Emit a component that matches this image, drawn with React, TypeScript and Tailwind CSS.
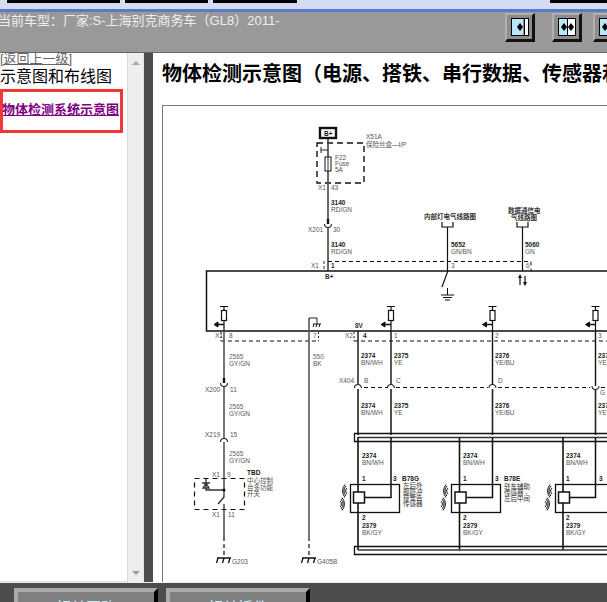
const CJK = "Liberation Sans, Noto Sans CJK SC, sans-serif";

function Label({ x, y, children, bold, color }: { x: number; y: number; children: string; bold?: boolean; color?: string }) {
  return (
    <text x={x} y={y} fontSize="6.5" fontFamily={CJK} fontWeight={bold ? 700 : 400} fill={color || "#555"}>
      {children}
    </text>
  );
}

function WireLabel({ x, y, num, color, gray }: { x: number; y: number; num: string; color: string; gray?: boolean }) {
  return (
    <>
      <Label x={x} y={y} bold={!gray} color={gray ? "#666" : "#222"}>{num}</Label>
      <Label x={x} y={y + 6.5} color="#555">{color}</Label>
    </>
  );
}

// pull-up resistor with arrow into the module
function PullUp({ x }: { x: number }) {
  return (
    <g stroke="#111" fill="none">
      <path d={`M${x - 4} 306.5H${x + 4}M${x} 306.5V310M${x} 321V331`} strokeWidth="1.2" />
      <rect x={x - 2.5} y={310.5} width={5} height={10} fill="#fff" strokeWidth="1.2" />
      <path d={`M${x} 324.5H${x - 9}`} strokeWidth="1.5" />
      <path d={`M${x - 10} 324.5l4 -2.5v5z`} fill="#111" />
    </g>
  );
}

function Ground({ x, y }: { x: number; y: number }) {
  return (
    <g stroke="#111" fill="none" strokeWidth="1.3">
      <path d={`M${x - 7} ${y}H${x + 7}M${x - 6} ${y}l-1.5 5M${x} ${y}l-1.5 5M${x + 6} ${y}l-1.5 5`} />
    </g>
  );
}

function Sensor({ x, left, right, tail }: { x: number; left: number; right: number; tail?: boolean }) {
  const inner = left - 5;
  return (
    <g fill="none" stroke="#111">
      <path d={`M${left} 437V550`} strokeWidth="1.6" />
      <rect x={x + 0.5} y={484.5} width={tail ? 80 : 49} height={28} strokeWidth="1.3" />
      <path d={`M${right} 437V497.5H${inner + 12}`} strokeWidth="1.5" />
      <rect x={inner + 0.5} y={492} width={11} height={11} fill="#fff" strokeWidth="1.5" />
      {/* radio waves */}
      <path d={`M${x - 3} 488a4 4 0 0 0 0 6M${x - 4} 486a7 7 0 0 0 0 10M${x - 5} 484.5a10 10 0 0 0 0 13`} strokeWidth="1" />
      <path d={`M${x - 10} 501a4 4 0 0 1 0 6M${x - 9} 499a7 7 0 0 1 0 10M${x - 8} 497.5a10 10 0 0 1 0 13`} strokeWidth="1" />
    </g>
  );
}

function Connector({ x, y, down }: { x: number; y: number; down?: boolean }) {
  return (
    <path
      d={down ? `M${x - 3.5} ${y - 3}a3.5 3.5 0 0 0 7 0` : `M${x - 3.5} ${y + 2}a3.5 3.5 0 0 1 7 0`}
      fill="#fff"
      stroke="#222"
      strokeWidth="1.1"
    />
  );
}

function Diagram() {
  return (
    <svg viewBox="163 106 444 476" className="block w-[444px] h-[476px]">
      {/* fuse block */}
      <rect x="320" y="128" width="16" height="10" fill="#fff" stroke="#111" strokeWidth="2.4" />
      <Label x={324} y={135.5} bold color="#111">B+</Label>
      <rect x="317" y="143" width="47" height="40" fill="none" stroke="#111" strokeWidth="1.4" strokeDasharray="6 4" />
      <path d="M328 139V271" stroke="#444" strokeWidth="1.6" />
      <path d="M321 150H328M321 147V153" stroke="#222" />
      <rect x="325" y="157" width="6" height="14" fill="#fff" stroke="#111" />
      <path d="M328 157V171" stroke="#333" />
      <Label x={366} y={139}>X51A</Label>
      <Label x={366} y={147}>保险丝盒—I/P</Label>
      <Label x={335} y={160}>F22</Label>
      <Label x={335} y={166}>Fuse</Label>
      <Label x={335} y={172}>5A</Label>
      <Label x={318} y={190}>X1</Label>
      <Label x={331} y={190}>43</Label>
      <WireLabel x={331} y={205} num="3140" color="RD/GN" />
      <path d="M328 219V226" stroke="#111" strokeWidth="2.4" />
      <Connector x={328} y={227} down />
      <Label x={308} y={232}>X201</Label>
      <Label x={333} y={232}>30</Label>
      <WireLabel x={331} y={247} num="3140" color="RD/GN" />

      {/* module outline */}
      <path d="M607 271H206.5V331H607" fill="none" stroke="#111" strokeWidth="1.5" />
      <path d="M328 261.5H531M531 261.5V271" fill="none" stroke="#111" strokeDasharray="4 3" />
      <path d="M324 261V271" stroke="#222" strokeDasharray="3 2" />
      <Label x={311} y={268}>X1</Label>
      <Label x={331} y={268} bold color="#222">1</Label>
      <Label x={325} y={279} bold color="#333">B+</Label>
      <Label x={451} y={268}>3</Label>
      <Label x={526} y={268}>6</Label>

      {/* upper feeds */}
      <Label x={424} y={219} bold color="#333">内部灯电气线路图</Label>
      <Label x={508} y={213} bold color="#333">数据通信电</Label>
      <Label x={511} y={220} bold color="#333">气线路图</Label>
      <path d="M442 222V227H453V222M517 222V227H528V222" fill="none" stroke="#111" strokeWidth="1.2" />
      <path d="M447.5 227V272L442 287M522.5 227V271" fill="none" stroke="#111" strokeWidth="1.2" />
      <WireLabel x={451} y={247} num="5652" color="GN/BN" />
      <WireLabel x={525} y={247} num="5060" color="GN" />
      <path d="M447.5 288V295M441 295H454M443 297.5H452M445 300H450" fill="none" stroke="#111" />
      <path d="M520 276V285M525 276V285" stroke="#111" strokeWidth="1.2" />
      <path d="M520 274l-2 4h4zM525 286l-2 -4h4z" fill="#111" />

      <PullUp x={224} />
      <PullUp x={391} />
      <PullUp x={492.5} />
      <PullUp x={595.5} />

      {/* left branch */}
      <path d="M221 341H319M354 341H607" stroke="#111" strokeDasharray="4 3" />
      <path d="M221 332V341M318.5 332V341M354 332V341" stroke="#222" strokeDasharray="2 2" />
      <Label x={215} y={338}>X1</Label>
      <Label x={229} y={338}>8</Label>
      <Label x={313} y={338}>7</Label>
      <Label x={345} y={338}>X2</Label>
      <Label x={363} y={338} bold color="#222">4</Label>
      <Label x={394} y={338}>1</Label>
      <Label x={495} y={338}>2</Label>
      <Label x={598} y={338}>3</Label>
      <Label x={355} y={328} bold color="#333">8V</Label>
      <path d="M224 331V537M309 318V537" stroke="#555" strokeWidth="1.6" />
      <path d="M224 537V556M309 537V556" stroke="#111" strokeWidth="1.2" strokeDasharray="4 3" />
      <path d="M309 318H317V324" fill="none" stroke="#222" />
      <path d="M313 324H321M314 324l-1 3M317 324l-1 3M320 324l-1 3" stroke="#111" />
      <WireLabel x={229} y={359} num="2565" color="GY/GN" gray />
      <WireLabel x={229} y={409} num="2565" color="GY/GN" gray />
      <WireLabel x={229} y={456} num="2565" color="GY/GN" gray />
      <WireLabel x={313} y={359} num="550" color="BK" gray />
      <path d="M224 378V385" stroke="#111" strokeWidth="2.4" />
      <Connector x={224} y={386} down />
      <Label x={205} y={392}>X200</Label>
      <Label x={230} y={392}>11</Label>
      <Label x={205} y={437}>X219</Label>
      <Label x={230} y={437}>15</Label>
      <Connector x={224} y={440} />

      {/* switch TBD */}
      <rect x="194.5" y="478.5" width="50" height="31" fill="none" stroke="#111" strokeWidth="1.2" strokeDasharray="5 4" />
      <path d="M224 497.5V504" stroke="#fff" strokeWidth="3" />
      <path d="M206 479V490H224M202 483H210M203 488l3 -5 3 5z" fill="none" stroke="#333" strokeWidth="1.3" />
      <circle cx="224" cy="490" r="1.5" fill="#111" />
      <path d="M224 497L218 504" stroke="#222" strokeWidth="1.2" />
      <Label x={212} y={477}>X1</Label>
      <Label x={227} y={477}>9</Label>
      <Label x={247} y={475} bold color="#111">TBD</Label>
      <Label x={247} y={483}>中心控制</Label>
      <Label x={247} y={489.5}>台多功能</Label>
      <Label x={247} y={496}>开关</Label>
      <Label x={212} y={517}>X1</Label>
      <Label x={228} y={517}>11</Label>
      <Ground x={224} y={558} />
      <Ground x={309} y={558} />
      <Label x={232} y={564}>G203</Label>
      <Label x={317} y={564}>G405B</Label>

      {/* lower bus wires */}
      <path d="M358 331V386M391 331V386M492.5 331V386M595.5 331V386" stroke="#111" strokeWidth="1.4" />
      <path d="M364 387.5H388M396 387.5H488M498 387.5H590M601 387.5H607" stroke="#111" strokeWidth="1.1" strokeDasharray="4 3" />
      <path d="M358 389V435M391 389V435M492.5 389V435M595.5 389V435" stroke="#222" strokeWidth="1.6" />
      <Connector x={358} y={386} />
      <Connector x={391} y={386} />
      <Connector x={492.5} y={386} />
      <Connector x={595.5} y={389} down />
      <Label x={339} y={383}>X404</Label>
      <Label x={364} y={383}>B</Label>
      <Label x={396} y={383}>C</Label>
      <Label x={498} y={383}>D</Label>
      <Label x={600} y={395}>G</Label>

      <WireLabel x={361} y={358} num="2374" color="BN/WH" />
      <WireLabel x={361} y={408} num="2374" color="BN/WH" />
      <WireLabel x={394} y={358} num="2375" color="YE" />
      <WireLabel x={394} y={408} num="2375" color="YE" />
      <WireLabel x={495} y={358} num="2376" color="YE/BU" />
      <WireLabel x={495} y={408} num="2376" color="YE/BU" />
      <WireLabel x={598} y={358} num="2377" color="YE" />
      <WireLabel x={598} y={408} num="2377" color="YE" />

      {/* shield bands */}
      <path d="M607 433.5H354.5V441.5H607" fill="none" stroke="#111" strokeWidth="1.3" />
      <path d="M358 437.5H607" stroke="#333" strokeWidth="1.7" />

      <Sensor x={350} left={358} right={391} />
      <Sensor x={451} left={459.5} right={492.5} />
      <Sensor x={555} left={563} right={595.5} tail />

      <WireLabel x={362} y={458} num="2374" color="BN/WH" />
      <WireLabel x={463} y={458} num="2374" color="BN/WH" />
      <WireLabel x={566} y={458} num="2374" color="BN/WH" />
      <Label x={362} y={481} bold color="#222">1</Label>
      <Label x={393} y={481} bold color="#222">3</Label>
      <Label x={463} y={481} bold color="#222">1</Label>
      <Label x={495} y={481} bold color="#222">3</Label>
      <Label x={566} y={481} bold color="#222">1</Label>
      <Label x={599} y={481} bold color="#222">3</Label>
      <Label x={362} y={520} bold color="#222">2</Label>
      <Label x={463} y={520} bold color="#222">2</Label>
      <Label x={566} y={520} bold color="#222">2</Label>
      <WireLabel x={362} y={528} num="2379" color="BK/GY" />
      <WireLabel x={463} y={528} num="2379" color="BK/GY" />
      <WireLabel x={566} y={528} num="2379" color="BK/GY" />
      <Label x={402} y={481} bold color="#222">B78G</Label>
      <Label x={403} y={488} color="#333">左后外</Label>
      <Label x={403} y={494} color="#333">部防冲</Label>
      <Label x={403} y={500} color="#333">撞警告</Label>
      <Label x={403} y={506} color="#333">传感器</Label>
      <Label x={504} y={481} bold color="#222">B78E</Label>
      <Label x={504} y={489} color="#333">驻车辅助</Label>
      <Label x={504} y={495} color="#333">传感器 -</Label>
      <Label x={504} y={501} color="#333">左后中间</Label>

      <path d="M607 546.5H354.5V554.5H607" fill="none" stroke="#111" strokeWidth="1.3" />
      <path d="M358 550H607" stroke="#333" strokeWidth="1.7" />
    </svg>
  );
}

function Diamond() {
  return (
    <div className="flex">
      <div className="w-0 h-0 border-y-[4px] border-y-transparent border-r-[3px] border-r-black" />
      <div className="w-0 h-0 border-y-[4px] border-y-transparent border-l-[3px] border-l-black" />
    </div>
  );
}

function ToolButton({ split }: { split?: boolean }) {
  return (
    <div className="w-[30px] h-[29px] shrink-0 bg-[#8c8c8c] border-t-2 border-l-2 border-r-[3px] border-b-[3px] border-t-[#b0b0b0] border-l-[#b0b0b0] border-r-[#111] border-b-[#111] flex items-center justify-center">
      <div className="w-[18px] h-[18px] border border-black flex">
        <div className="flex-1 bg-[#b8e6fb] flex items-center justify-end">
          <Diamond />
        </div>
        {split ? (
          <div className="w-[8px] bg-white border-l border-black flex items-center justify-start">
            <Diamond />
          </div>
        ) : (
          <div className="w-[4px] bg-white border-l border-black ml-px" />
        )}
      </div>
    </div>
  );
}

export default function App() {
  return (
    <div className="w-[607px] h-[602px] overflow-hidden flex flex-col bg-[#4d4d4d] font-['Liberation_Sans','Noto_Sans_CJK_SC',sans-serif]">
      {/* window title strip */}
      <div className="h-[9px] shrink-0 bg-[#d3dcf2] flex gap-[5px] pl-[7px]">
        <div className="w-[113px] h-[3px] bg-black" />
        <div className="w-[83px] h-[3px] bg-black" />
        <div className="w-[84px] h-[3px] bg-black" />
        <div className="w-[57px] h-[3px] bg-black ml-[248px]" />
      </div>
      <div className="h-[3px] shrink-0 bg-[#5a79c8]" />

      {/* header */}
      <div className="h-[40px] shrink-0 bg-[#999] flex items-start overflow-hidden">
        <div className="w-[505px] shrink-0 text-[13px] leading-[17px] -indent-[2px] text-[#eee] whitespace-nowrap">
          当前车型：厂家:S-上海别克商务车（GL8）2011-
        </div>
        <div className="pt-px flex shrink-0">
          <ToolButton />
          <div className="w-[17px] shrink-0" />
          <ToolButton split />
          <div className="w-[11px] shrink-0" />
          <ToolButton split />
        </div>
      </div>

      {/* main */}
      <div className="h-[530px] shrink-0 flex border-t border-[#666]">
        <div className="w-[127px] shrink-0 bg-white overflow-hidden border-b border-[#ddd]">
          <div className="text-[13px] leading-[12px] text-[#666] underline whitespace-nowrap">[返回上一级]</div>
          <div className="text-[16px] leading-[20px] text-black whitespace-nowrap mt-[2px]">示意图和布线图</div>
          <div className="w-[123px] h-[44px] mt-[2px] border-[3px] border-[#f33636] flex items-start overflow-hidden">
            <a className="text-[13px] leading-[16px] mt-[10px] -ml-[1px] font-bold text-[#800080] underline whitespace-nowrap font-['Liberation_Serif','Noto_Sans_CJK_SC',serif]">
              物体检测系统示意图
            </a>
          </div>
        </div>
        <div className="w-[17px] shrink-0 bg-[#eee] border-l border-[#ddd] border-r border-r-[#e4e4e4] flex flex-col items-center justify-between pt-[8px] pb-[7px]">
          <div className="w-0 h-0 border-x-[4px] border-x-transparent border-b-[4px] border-b-[#aaa]" />
          <div className="w-0 h-0 border-x-[4px] border-x-transparent border-t-[4px] border-t-[#999]" />
        </div>
        <div className="w-[9px] shrink-0 bg-[#4d4d4d]" />
        <div className="w-[454px] shrink-0 bg-white flex flex-col overflow-hidden pl-[9px]">
          <div className="h-[52px] shrink-0 pt-[9px] text-[20px] leading-[24px] font-bold text-black whitespace-nowrap font-['Liberation_Serif','Noto_Sans_CJK_SC',serif]">
            物体检测示意图（电源、搭铁、串行数据、传感器和
          </div>
          <div className="flex-1 border-l border-t border-[#777]">
            <Diagram />
          </div>
        </div>
      </div>

      {/* bottom buttons */}
      <div className="flex-1 flex gap-[8px] pl-[14px] pt-[5px] overflow-hidden border-t border-[#eee]">
        <div className="w-[144px] h-[40px] shrink-0 bg-[#808080] border-t-[4px] border-l-[4px] border-r-[4px] border-t-[#aaa] border-l-[#aaa] border-r-black text-center text-[15px] leading-[18px] pt-[7px] text-[#bfeeff]">
          相关回路
        </div>
        <div className="w-[144px] h-[40px] shrink-0 bg-[#808080] border-t-[4px] border-l-[4px] border-r-[4px] border-t-[#aaa] border-l-[#aaa] border-r-black text-center text-[15px] leading-[18px] pt-[7px] text-[#bfeeff]">
          相关插件
        </div>
      </div>
    </div>
  );
}
